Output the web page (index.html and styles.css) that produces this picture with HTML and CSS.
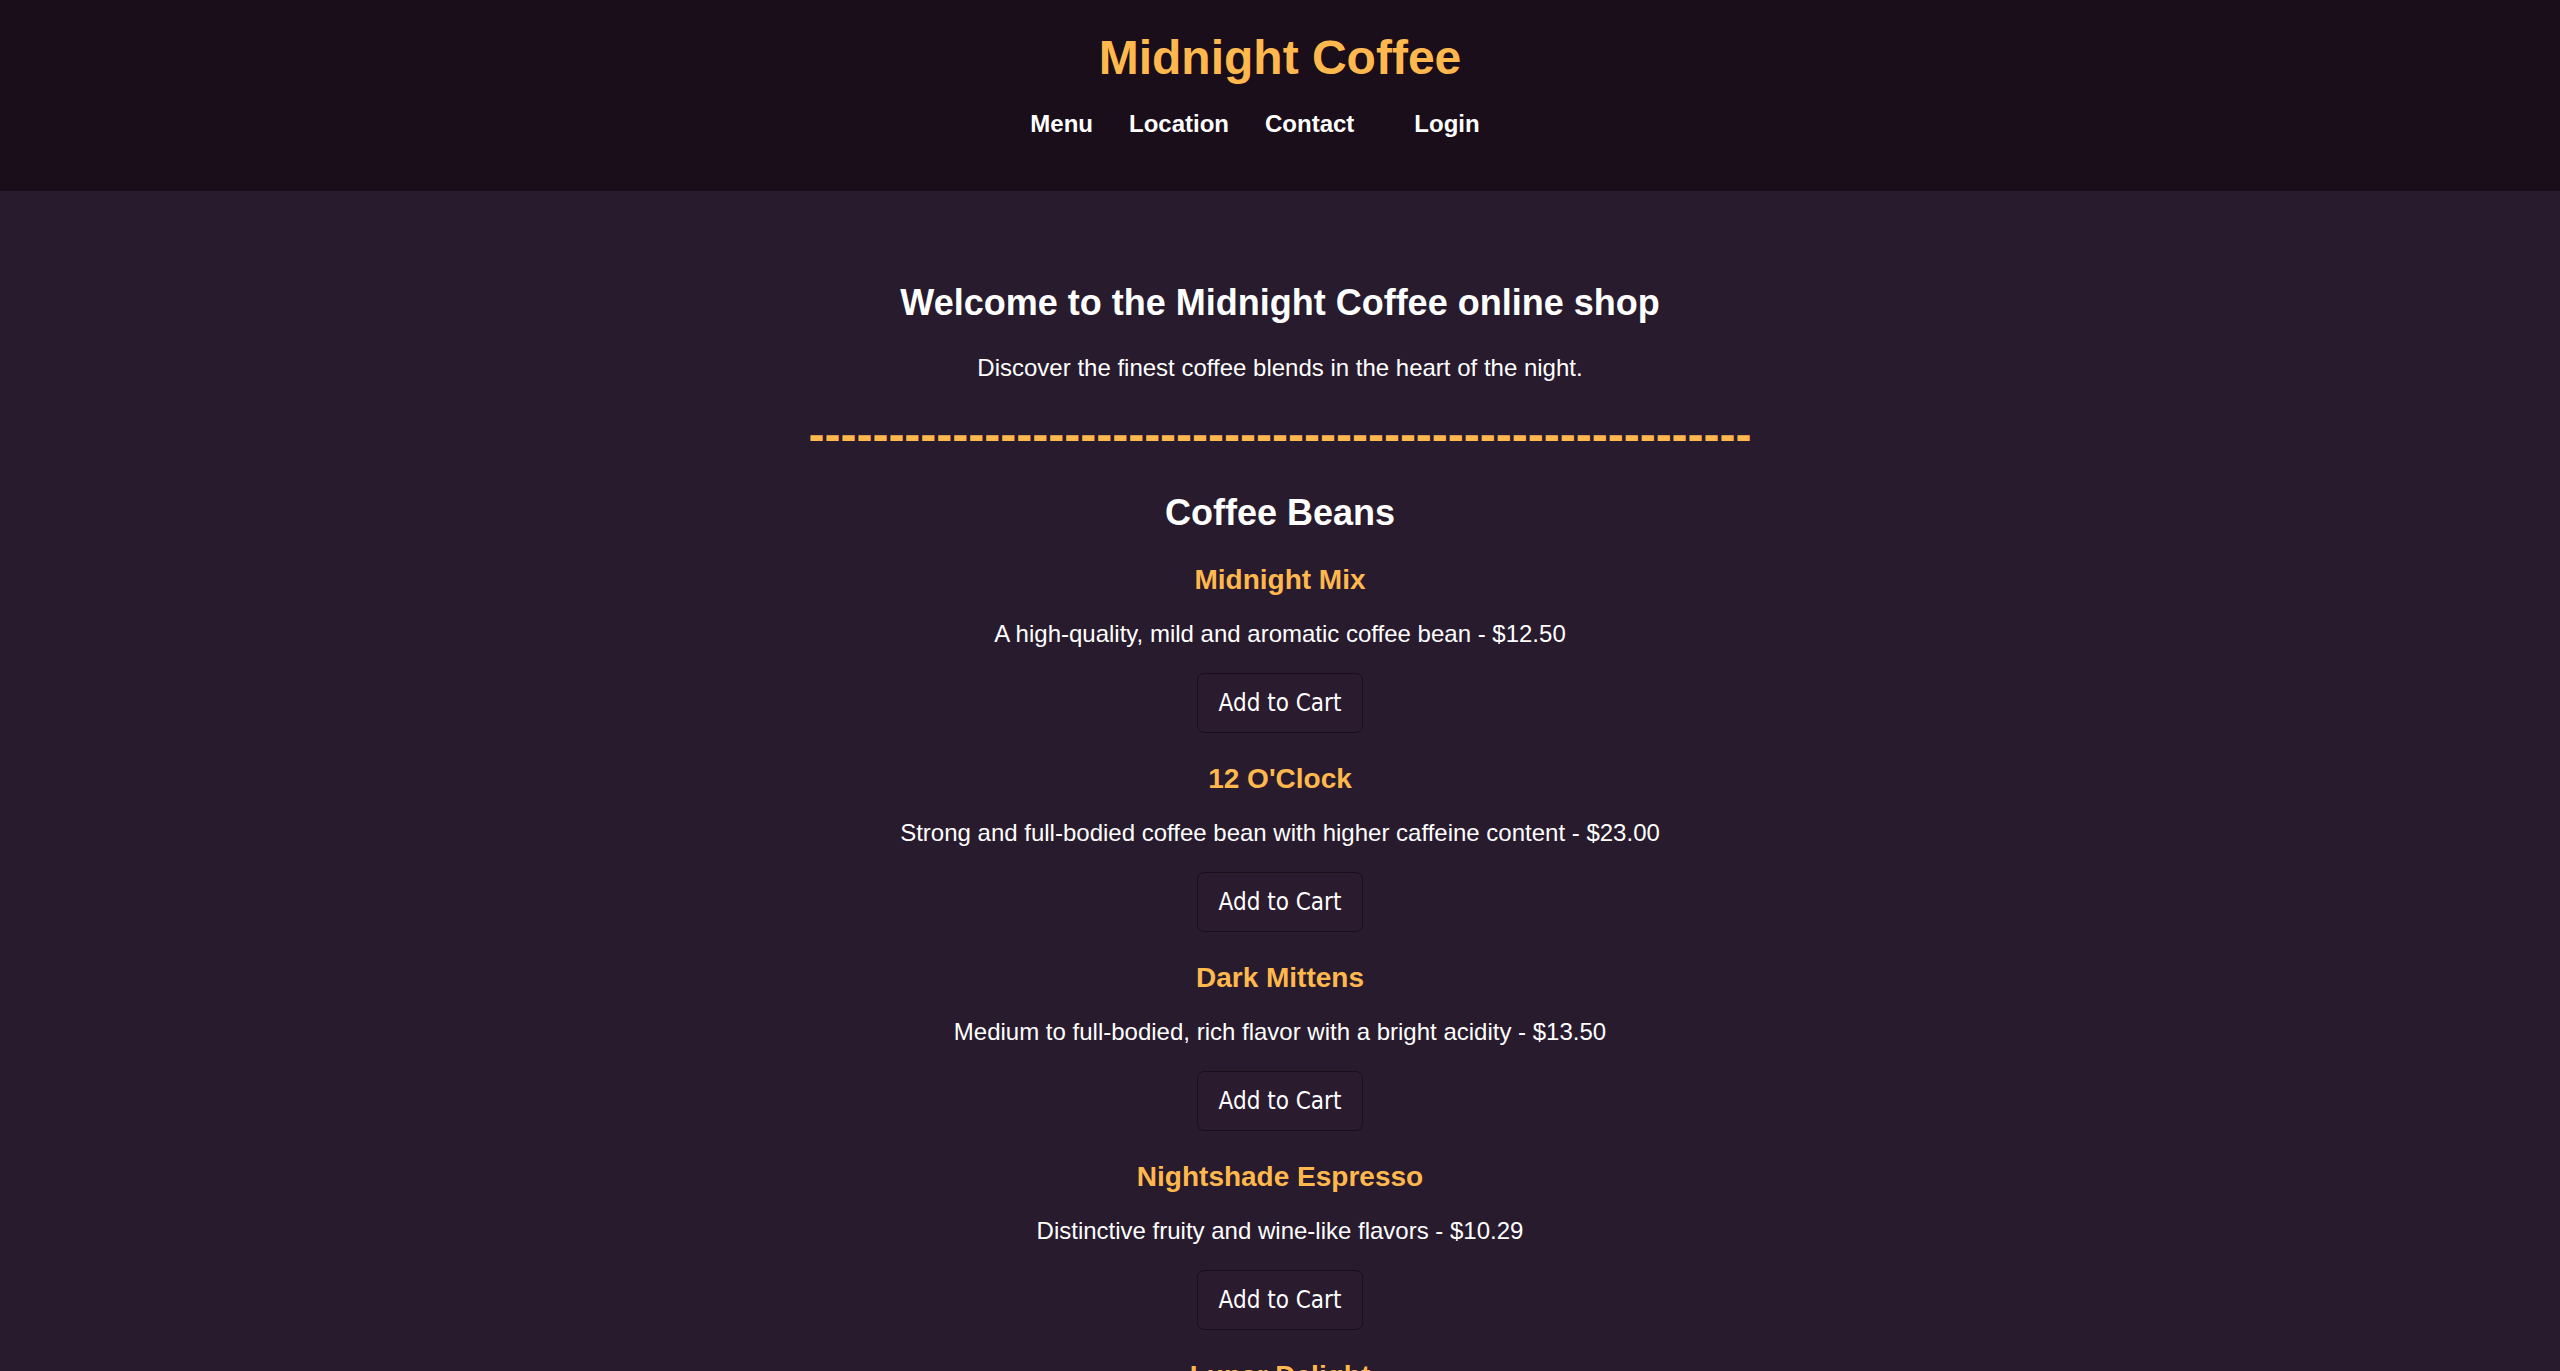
FILE: index.html
```html
<!DOCTYPE html>
<html lang="en">
<head>
<meta charset="utf-8">
<title>Midnight Coffee</title>
<link rel="stylesheet" href="styles.css">
</head>
<body>
<header class="site-header">
  <h1 class="brand">Midnight Coffee</h1>
  <nav class="nav">
    <a class="nav-link" href="#">Menu</a>
    <a class="nav-link" href="#">Location</a>
    <a class="nav-link" href="#">Contact</a>
    <a class="nav-link nav-login" href="#">Login</a>
  </nav>
</header>
<main class="shop">
  <section class="welcome">
    <h2 class="welcome-title">Welcome to the Midnight Coffee online shop</h2>
    <p class="welcome-text">Discover the finest coffee blends in the heart of the night.</p>
  </section>
  <div class="divider">-----------------------------------------------------------</div>
  <h2 class="section-title">Coffee Beans</h2>
  <div class="products">
    <div class="product">
      <h3 class="product-name">Midnight Mix</h3>
      <p class="product-desc">A high-quality, mild and aromatic coffee bean - $12.50</p>
      <button class="cart-btn">Add to Cart</button>
    </div>
    <div class="product">
      <h3 class="product-name">12 O'Clock</h3>
      <p class="product-desc">Strong and full-bodied coffee bean with higher caffeine content - $23.00</p>
      <button class="cart-btn">Add to Cart</button>
    </div>
    <div class="product">
      <h3 class="product-name">Dark Mittens</h3>
      <p class="product-desc">Medium to full-bodied, rich flavor with a bright acidity - $13.50</p>
      <button class="cart-btn">Add to Cart</button>
    </div>
    <div class="product">
      <h3 class="product-name">Nightshade Espresso</h3>
      <p class="product-desc">Distinctive fruity and wine-like flavors - $10.29</p>
      <button class="cart-btn">Add to Cart</button>
    </div>
    <div class="product">
      <h3 class="product-name">Lunar Delight</h3>
      <p class="product-desc">Smooth and balanced with notes of chocolate and caramel - $15.75</p>
      <button class="cart-btn">Add to Cart</button>
    </div>
  </div>
</main>
</body>
</html>
```
FILE: styles.css
```css
html, body {
  margin: 0;
  padding: 0;
}

body {
  background: #281b2e;
  color: #ffffff;
  font-family: "Liberation Sans", Arial, sans-serif;
}

.site-header {
  background: #1a0e1a;
  padding: 30px 0 53px;
  text-align: center;
}

.brand {
  margin: 0;
  font-size: 48px;
  font-weight: bold;
  color: #ffb84d;
}

.nav {
  display: flex;
  justify-content: center;
  margin-top: 25px;
  padding-right: 50px;
}

.nav-link {
  color: #ffffff;
  font-size: 24px;
  font-weight: bold;
  text-decoration: none;
  margin: 0 18px;
}

.nav-login {
  margin-left: 42px;
}

.shop {
  text-align: center;
  padding-top: 91px;
  padding-bottom: 60px;
}

.welcome-title,
.section-title {
  margin: 0;
  font-size: 36px;
  font-weight: bold;
}

.welcome-text {
  margin: 30px 0 0;
  font-size: 24px;
}

.divider {
  margin-top: 25px;
  font-size: 48px;
  font-weight: bold;
  color: #ffb84d;
  white-space: nowrap;
}

.section-title {
  margin-top: 30px;
}

.products {
  display: flex;
  flex-direction: column;
  gap: 30px;
  margin-top: 30px;
}

.product {
  display: flex;
  flex-direction: column;
  align-items: center;
}

.product-name {
  margin: 0;
  font-size: 28px;
  font-weight: bold;
  color: #ffb84d;
}

.product-desc {
  margin: 24px 0 25px;
  font-size: 24px;
}

.cart-btn {
  font-family: "DejaVu Sans Condensed", "DejaVu Sans", sans-serif;
  font-stretch: condensed;
  font-size: 24px;
  line-height: 28px;
  padding: 15px 21px;
  color: #ffffff;
  background: #2a1b2f;
  border: 1px solid #1a0e1a;
  border-radius: 7px;
  cursor: pointer;
}
```
